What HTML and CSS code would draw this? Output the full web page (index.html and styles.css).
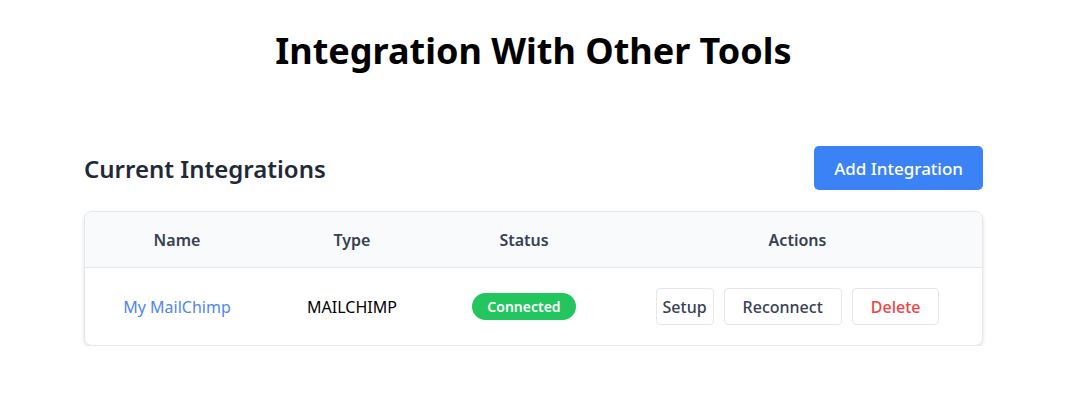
FILE: index.html
```html
<!DOCTYPE html>
<html lang="en">
<head>
<meta charset="utf-8">
<title>Integration With Other Tools</title>
<link rel="stylesheet" href="styles.css">
</head>
<body>
<main class="page">
  <h1 class="title">Integration With Other Tools</h1>
  <section class="section">
    <div class="section-head">
      <h2 class="section-title">Current Integrations</h2>
      <button class="btn-primary">Add Integration</button>
    </div>
    <div class="card">
      <table class="table">
        <thead>
          <tr>
            <th class="col-name">Name</th>
            <th class="col-type">Type</th>
            <th class="col-status">Status</th>
            <th class="col-actions">Actions</th>
          </tr>
        </thead>
        <tbody>
          <tr>
            <td><a class="link" href="#">My MailChimp</a></td>
            <td class="type">MAILCHIMP</td>
            <td><span class="badge">Connected</span></td>
            <td>
              <div class="actions">
                <button class="btn btn-setup">Setup</button>
                <button class="btn">Reconnect</button>
                <button class="btn btn-danger">Delete</button>
              </div>
            </td>
          </tr>
        </tbody>
      </table>
    </div>
  </section>
</main>
</body>
</html>
```
FILE: styles.css
```css
html, body {
  margin: 0;
  padding: 0;
  background: #ffffff;
}
body {
  font-family: "Noto Sans", "Open Sans", sans-serif;
  color: #111827;
  padding-right: 15px;
}
.page {
  width: 899px;
  margin: 0 auto;
}
.title {
  margin: 0;
  padding-top: 26px;
  text-align: center;
  font-size: 36px;
  font-weight: 700;
  line-height: 50px;
  color: #000;
}
.section {
  margin-top: 70px;
}
.section-head {
  display: flex;
  justify-content: space-between;
  align-items: center;
  height: 44px;
}
.section-title {
  margin: 0;
  font-size: 24px;
  font-weight: 600;
  color: #1f2937;
}
.btn-primary {
  font-family: inherit;
  background: #3b82f6;
  color: #fff;
  border: 0;
  border-radius: 5px;
  height: 44px;
  padding: 0 20px;
  font-size: 17px;
  font-weight: 500;
}
.card {
  margin-top: 21px;
  border: 1px solid #e5e7eb;
  border-radius: 8px;
  overflow: hidden;
  box-shadow: 0 2px 4px rgba(0,0,0,0.10), 0 1px 2px rgba(0,0,0,0.06);
}
.table {
  width: 100%;
  border-collapse: collapse;
}
.table th {
  background: #f9fafb;
  height: 55px;
  padding: 0;
  font-size: 16px;
  font-weight: 600;
  color: #374151;
  border-bottom: 1px solid #e5e7eb;
  text-align: center;
}
.col-name { width: 184px; }
.col-type { width: 166px; }
.col-status { width: 178px; }
.table td {
  height: 77px;
  padding: 0;
  text-align: center;
  font-size: 16px;
}
.link {
  color: #4f86f0;
  text-decoration: none;
}
.type {
  color: #000;
  font-size: 17px;
}
.badge {
  display: inline-block;
  background: #22c55e;
  color: #fff;
  font-size: 14px;
  font-weight: 600;
  padding: 0 15px;
  line-height: 27px;
  border-radius: 14px;
}
.actions {
  display: flex;
  justify-content: center;
  gap: 10px;
}
.btn {
  font-family: inherit;
  background: #fff;
  border: 1px solid #e5e7eb;
  border-radius: 4px;
  height: 37px;
  padding: 0 18px;
  font-size: 16px;
  font-weight: 500;
  color: #374151;
}
.btn-setup {
  padding: 0 6px;
}
.btn-danger {
  color: #ef4444;
}
```
